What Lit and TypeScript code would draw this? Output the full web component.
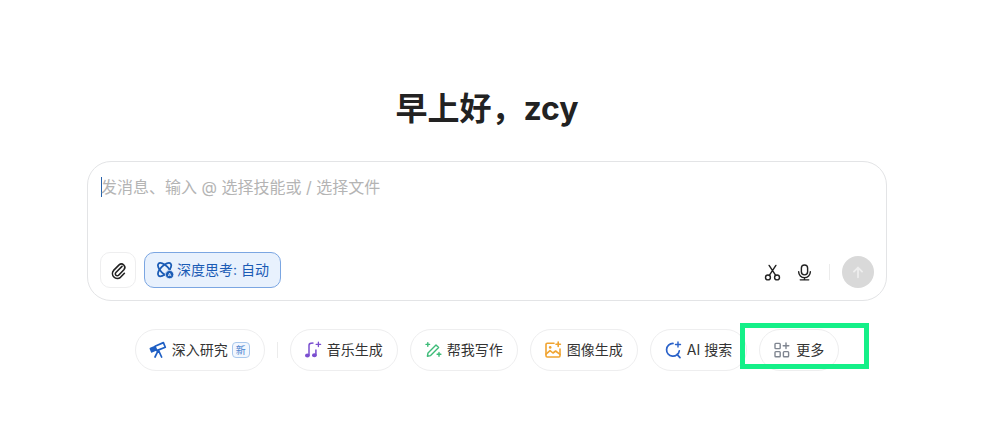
import { LitElement, html, css, svg } from "lit";
import { customElement } from "lit/decorators.js";

const icons = {
  clip: svg`<path d="M13 5.4 6.9 11.5a1.9 1.9 0 0 0 2.7 2.7l5.3-5.5a3.4 3.4 0 0 0-4.8-4.8L4.6 9.4a4.9 4.9 0 0 0 6.9 6.9l3.9-4" fill="none" stroke="currentColor" stroke-width="1.6" stroke-linecap="round" stroke-linejoin="round"/>`,
  think: svg`<g fill="none" stroke="currentColor" stroke-width="1.8"><ellipse cx="8.6" cy="8.6" rx="8.6" ry="4" transform="rotate(45 8.6 8.6)"/><ellipse cx="8.6" cy="8.6" rx="8.6" ry="4" transform="rotate(-45 8.6 8.6)"/></g><circle cx="13.6" cy="13.6" r="4.2" fill="currentColor" stroke="#e8f1fd" stroke-width=".8"/><path d="M12.2 15.2l1.4-3.2 1.4 3.2M12.7 14.2h1.8" fill="none" stroke="#e8f1fd" stroke-width=".8"/>`,
  cut: svg`<g fill="none" stroke="currentColor" stroke-width="1.5" stroke-linecap="round"><circle cx="4.2" cy="14.2" r="2.6"/><circle cx="13.8" cy="14.2" r="2.6"/><path d="M5.6 12 12.6 1.5M12.4 12 5.4 1.5"/></g>`,
  mic: svg`<g fill="none" stroke="currentColor" stroke-width="1.5" stroke-linecap="round"><rect x="5.7" y="1" width="6.6" height="10.5" rx="3.3"/><path d="M2.8 8.2a6.2 6.2 0 0 0 12.4 0M4.5 16.8h9M9 14.4v2.4"/></g>`,
  up: svg`<path d="M9 15V4M4.4 8.6 9 4l4.6 4.6" fill="none" stroke="currentColor" stroke-width="2" stroke-linecap="round" stroke-linejoin="round"/>`,
  scope: svg`<g fill="none" stroke="#1f5fc4" stroke-width="1.7" stroke-linejoin="round" stroke-linecap="round"><path d="M6 5.2 14.4 1.6l1.9 4.6-8.6 3.4z"/><path d="M1.4 7.6 5.6 5.8l1.2 3.2-4 1.8z" fill="#1f5fc4"/><path d="M9.4 9.2 12.6 16M9.4 9.2 6 16"/></g>`,
  music: svg`<g fill="#7b4fd0"><ellipse cx="3.4" cy="14.6" rx="2.4" ry="2"/><ellipse cx="10.4" cy="14.2" rx="2.4" ry="2"/></g><path d="M5 14.6V4.4q0-2 2-2.2l2.5-.3M11.9 8.4V14" fill="none" stroke="#7b4fd0" stroke-width="1.5"/><path d="M14.4 1.2v4.4M12.2 3.4h4.4" stroke="#7b4fd0" stroke-width="1.3" stroke-linecap="round"/>`,
  write: svg`<g fill="none" stroke="#3dbb78" stroke-width="1.4" stroke-linecap="round" stroke-linejoin="round"><path d="M3.4 15.2l.6-3.2L12 4l2.6 2.6-8 8z"/><path d="M3.8 1.6v3.6M2 3.4h3.6M15 11.4v3.8M13.1 13.3h3.8"/></g>`,
  image: svg`<g fill="none" stroke="#f0a431" stroke-width="1.6" stroke-linecap="round" stroke-linejoin="round"><path d="M10 2.2H3.2a1.2 1.2 0 0 0-1.2 1.2v11.4A1.2 1.2 0 0 0 3.2 16h11.6a1.2 1.2 0 0 0 1.2-1.2V8"/><path d="M2 13.2l4-3.6 3 2.4 2.6-2 4.4 3.4"/><path d="M14.2 1v4.4M12 3.2h4.4"/></g><circle cx="6.2" cy="6.4" r="1.3" fill="#f0a431"/>`,
  search: svg`<g fill="none" stroke="#2a62c9" stroke-width="1.7" stroke-linecap="round"><path d="M9 2.4a6.4 6.4 0 1 0 6.3 7.4M13 13.4l3 3.2"/></g><path d="M14 1v5M11.5 3.5h5" stroke="#2a62c9" stroke-width="1.4" stroke-linecap="round"/>`,
  more: svg`<g fill="none" stroke="#7f8590" stroke-width="1.4"><rect x="2" y="2.4" width="5.2" height="5.2" rx=".8"/><rect x="2" y="10.6" width="5.2" height="5.2" rx=".8"/><rect x="10.4" y="10.6" width="5.2" height="5.2" rx=".8"/><path d="M13 2v5.6M10.2 4.8h5.6" stroke-linecap="round"/></g>`,
};

const icon = (name: keyof typeof icons, size = 16, box = "1 1 16 16") =>
  html`<svg width=${size} height=${size} viewBox=${box} aria-hidden="true">${icons[name]}</svg>`;

@customElement("app-root")
export class AppRoot extends LitElement {
  static styles = css`
    :host {
      display: block;
      width: 1001px;
      height: 421px;
      overflow: hidden;
      position: relative;
      background: #fff;
      color: #222;
      font-family: Inter, "Noto Sans CJK SC", sans-serif;
    }
    svg {
      overflow: visible;
    }
    .main {
      width: 974px;
      padding-top: 85px;
      display: flex;
      flex-direction: column;
      align-items: center;
    }
    h1 {
      margin: 0;
      font-size: 32px;
      line-height: 48px;
      font-weight: 700;
      color: #222;
      height: 48px;
    }
    .card {
      box-sizing: border-box;
      margin-top: 28px;
      width: 800px;
      height: 140px;
      border: 1px solid #e3e4e6;
      border-radius: 24px;
      padding: 10px 12px 12px 13px;
      display: flex;
      flex-direction: column;
      justify-content: space-between;
    }
    .input {
      display: flex;
      align-items: center;
      height: 28px;
      font-size: 16px;
      color: #b4b4b4;
      white-space: pre;
    }
    .caret {
      width: 1px;
      height: 20px;
      background: #2a62a9;
      margin-top: 2px;
      margin-right: -1px;
    }
    .bar {
      display: flex;
      align-items: flex-end;
      gap: 8px;
      margin-left: -1px;
    }
    .attach {
      box-sizing: border-box;
      width: 36px;
      height: 36px;
      border: 1px solid #eeeeef;
      border-radius: 10px;
      display: flex;
      align-items: center;
      justify-content: center;
      color: #222;
    }
    .think {
      box-sizing: border-box;
      height: 36px;
      width: 137px;
      border: 1px solid #7ba6e2;
      background: #e8f1fd;
      border-radius: 10px;
      display: flex;
      align-items: center;
      gap: 4px;
      padding-left: 12px;
      color: #1a5bb5;
      font-size: 14px;
    }
    .think span {
      padding-bottom: 3px;
    }
    .right {
      margin-left: auto;
      display: flex;
      align-items: center;
      height: 32px;
    }
    .tool {
      display: flex;
      color: #222;
    }
    .tool.mic {
      margin-left: 15px;
    }
    .sep {
      width: 1px;
      height: 16px;
      background: #ececec;
      margin: 0 12px 0 16px;
    }
    .send {
      width: 32px;
      height: 32px;
      border-radius: 50%;
      background: #d9d9d9;
      color: #eeeeee;
      display: flex;
      align-items: center;
      justify-content: center;
    }
    .pills {
      margin-top: 28px;
      display: flex;
      align-items: center;
      gap: 12px;
    }
    .pill {
      box-sizing: border-box;
      height: 42px;
      border: 1px solid #eeeeef;
      border-radius: 21px;
      padding: 0 14px;
      display: flex;
      align-items: center;
      gap: 6px;
      font-size: 14px;
      color: #333;
      white-space: nowrap;
    }
    .pill span:not(.new) {
      padding-bottom: 2px;
    }
    .new {
      box-sizing: border-box;
      height: 16px;
      width: 18px;
      text-align: center;
      border: 1px solid #a9c8ec;
      border-radius: 4px;
      background: #f2f7fe;
      color: #4d86cf;
      font-size: 10px;
      line-height: 14px;
      margin-left: -2px;
    }
    .vsep {
      width: 1px;
      height: 16px;
      background: #ececec;
    }
    .mark {
      position: absolute;
      box-sizing: border-box;
      left: 740px;
      top: 323px;
      width: 129px;
      height: 46px;
      border: 5px solid #14f088;
    }
  `;

  render() {
    return html`
      <div class="main">
        <h1>早上好，zcy</h1>
        <div class="card">
          <div class="input"><span class="caret"></span>发消息、输入 @ 选择技能或 / 选择文件</div>
          <div class="bar">
            <div class="attach">${icon("clip", 18, "0 0 18 18")}</div>
            <div class="think">${icon("think", 16)}<span>深度思考: 自动</span></div>
            <div class="right">
              <span class="tool">${icon("cut", 17, "0 0 18 18")}</span>
              <span class="tool mic">${icon("mic", 17, "0 0 18 18")}</span>
              <span class="sep"></span>
              <span class="send">${icon("up", 16, "0 0 18 18")}</span>
            </div>
          </div>
        </div>
        <div class="pills">
          <div class="pill">${icon("scope")}<span>深入研究</span><span class="new">新</span></div>
          <span class="vsep"></span>
          <div class="pill">${icon("music")}<span>音乐生成</span></div>
          <div class="pill">${icon("write")}<span>帮我写作</span></div>
          <div class="pill">${icon("image")}<span>图像生成</span></div>
          <div class="pill">${icon("search")}<span>AI 搜索</span></div>
          <div class="pill">${icon("more")}<span>更多</span></div>
        </div>
      </div>
      <div class="mark"></div>
    `;
  }
}
